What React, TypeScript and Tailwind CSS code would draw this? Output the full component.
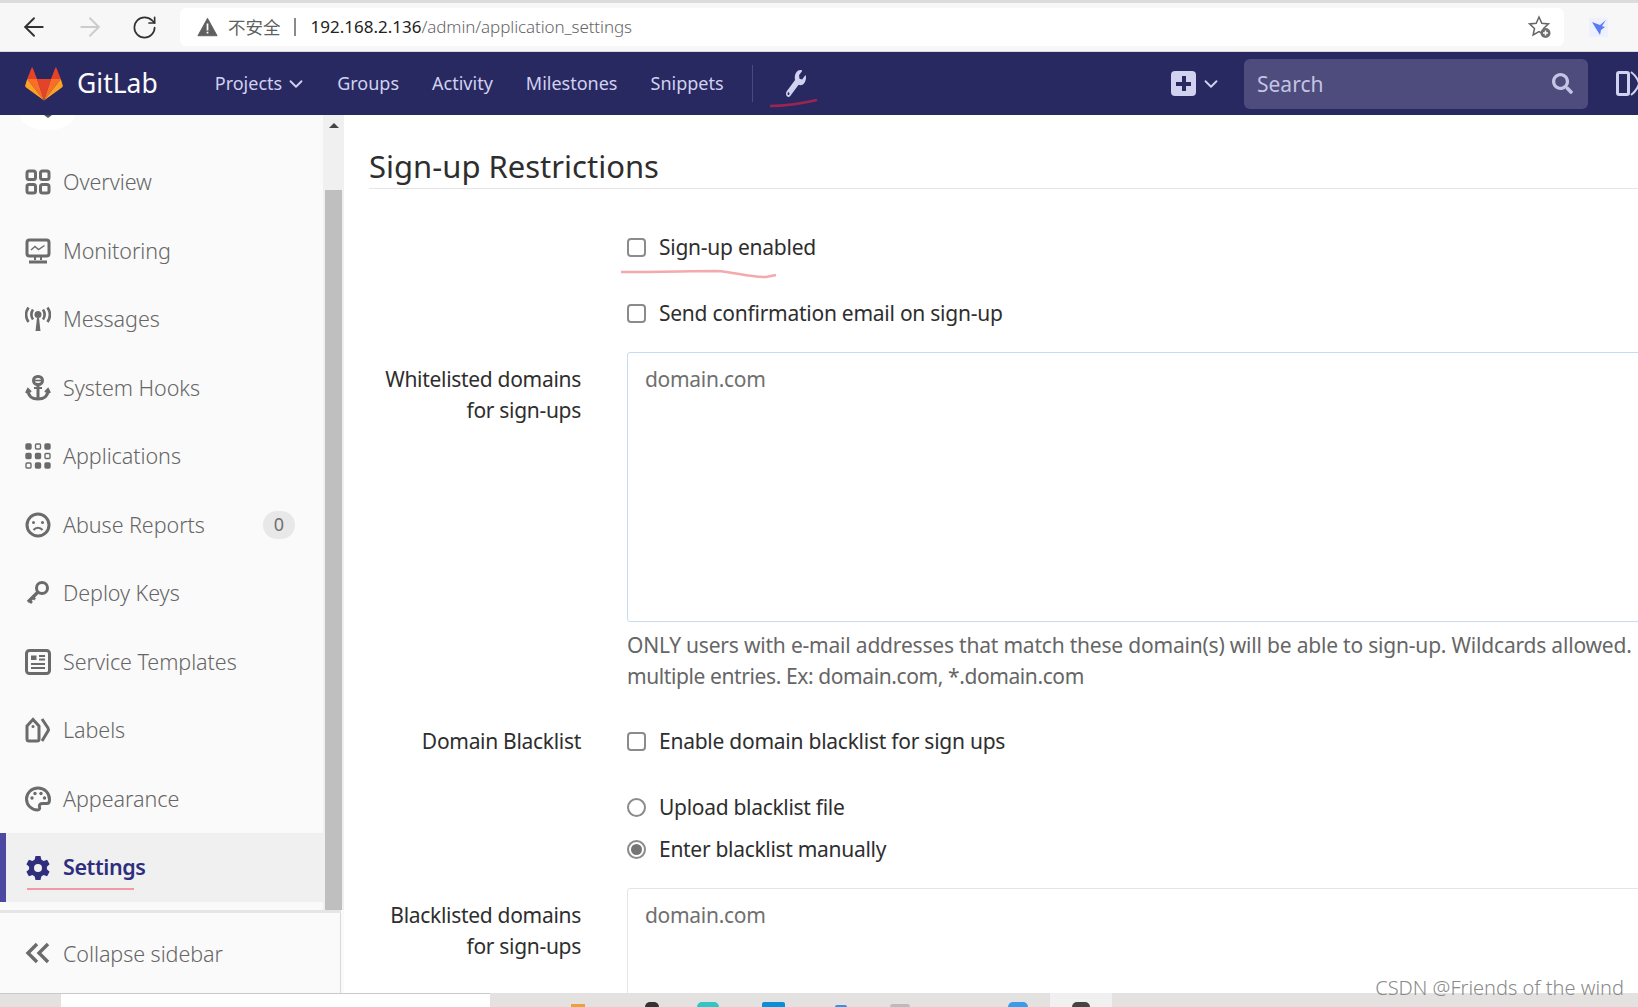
import { ArrowLeft, ArrowRight, RotateCw, ChevronDown } from 'lucide-react';
import { FaSearch, FaWrench } from 'react-icons/fa';

const font = "font-['Noto_Sans','Open_Sans',sans-serif]";

const OverviewIcon = () => (
  <svg viewBox="0 0 26 26" className="w-[26px] h-[26px]" fill="none" stroke="#6b6b6b" strokeWidth="3">
    <rect x="2" y="2" width="8.5" height="8.5" rx="2" />
    <rect x="15.5" y="2" width="8.5" height="8.5" rx="2" />
    <rect x="2" y="15.5" width="8.5" height="8.5" rx="2" />
    <rect x="15.5" y="15.5" width="8.5" height="8.5" rx="2" />
  </svg>
);

const MonitorIcon = () => (
  <svg viewBox="0 0 26 26" className="w-[26px] h-[26px]" fill="none" stroke="#6b6b6b">
    <rect x="2" y="2" width="22" height="16" rx="2.5" strokeWidth="3" />
    <path d="M6 12l4-3.5 3.5 3 6-4" strokeWidth="1.4" />
    <path d="M10 19v3M16 19v3" strokeWidth="2" />
    <path d="M4 24h18" strokeWidth="3" />
  </svg>
);

const MessagesIcon = () => (
  <svg viewBox="0 0 26 26" className="w-[26px] h-[26px]" fill="none" stroke="#6b6b6b" strokeWidth="2.6">
    <circle cx="13" cy="8.5" r="3.5" fill="#6b6b6b" stroke="none" />
    <path d="M8 3.5c-2 3-2 7 0 10M18 3.5c2 3 2 7 0 10M3.5 1.5c-3 4.500-3 10 0 14.500M22.500 1.500c3 4.500 3 10 0 14.500" />
    <path d="M10.500 25l1.500-13h2l1.500 13z" fill="#6b6b6b" stroke="none" />
  </svg>
);

const AnchorIcon = () => (
  <svg viewBox="0 0 26 26" className="w-[26px] h-[26px]" fill="none" stroke="#6b6b6b" strokeWidth="3">
    <rect x="8.500" y="1.500" width="9" height="8" rx="4" />
    <path d="M13 9v15" />
    <path d="M3 15c0 6 4 9 10 9s10-3 10-9" />
    <path d="M9 5.500h8" strokeWidth="1.600" />
    <path d="M9 13h8M1 18l2-4 3 3M25 18l-2-4-3 3" strokeWidth="2" />
  </svg>
);

const AppsIcon = () => (
  <svg viewBox="0 0 26 26" className="w-[26px] h-[26px]" fill="#6b6b6b" stroke="#6b6b6b" strokeWidth="1.4">
    <rect x="1" y="1" width="5" height="5" rx="1" />
    <rect x="10.500" y="1" width="5" height="5" rx="1" fill="none" />
    <rect x="20" y="1" width="5" height="5" rx="1" />
    <rect x="1" y="10.500" width="5" height="5" rx="1" />
    <rect x="10.500" y="10.500" width="5" height="5" rx="1" />
    <rect x="20" y="10.500" width="5" height="5" rx="1" fill="none" />
    <rect x="1" y="20" width="5" height="5" rx="1" fill="none" />
    <rect x="10.500" y="20" width="5" height="5" rx="1" />
    <rect x="20" y="20" width="5" height="5" rx="1" />
  </svg>
);

const AbuseIcon = () => (
  <svg viewBox="0 0 26 26" className="w-[26px] h-[26px]" fill="none" stroke="#6b6b6b" strokeWidth="3">
    <circle cx="13" cy="13" r="11" />
    <circle cx="8.500" cy="10.500" r="1.500" fill="#6b6b6b" stroke="none" />
    <circle cx="17.500" cy="10.500" r="1.500" fill="#6b6b6b" stroke="none" />
    <path d="M8.500 18c2.500-3 6.500-3 9 0" strokeWidth="2" />
  </svg>
);

const KeyIcon = () => (
  <svg viewBox="0 0 26 26" className="w-[26px] h-[26px]" fill="none" stroke="#6b6b6b" strokeWidth="3">
    <circle cx="17" cy="8" r="5.500" />
    <path d="M13 12L3 22" strokeWidth="3.400" />
    <path d="M4 20l3 3M7.500 17l2.500 2.500" strokeWidth="2.600" />
  </svg>
);

const TemplatesIcon = () => (
  <svg viewBox="0 0 26 26" className="w-[26px] h-[26px]" fill="none" stroke="#6b6b6b">
    <rect x="1.500" y="1.500" width="23" height="23" rx="3" strokeWidth="3" />
    <rect x="6" y="6.500" width="5.500" height="4.500" fill="#6b6b6b" stroke="none" />
    <path d="M14 7h6M14 10.500h6M6 15h14M6 19h14" strokeWidth="1.800" />
  </svg>
);

const LabelsIcon = () => (
  <svg viewBox="0 0 26 26" className="w-[26px] h-[26px]" fill="none" stroke="#6b6b6b" strokeWidth="3">
    <path d="M2 9l6-6.500L14 9v13a2 2 0 0 1-2 2H4a2 2 0 0 1-2-2z" />
    <circle cx="8" cy="9.500" r="1.500" fill="#6b6b6b" stroke="none" />
    <path d="M17 2l6 9c.6 1 .6 2 0 3l-6 10" />
  </svg>
);

const PaletteIcon = () => (
  <svg viewBox="0 0 26 26" className="w-[26px] h-[26px]" fill="none" stroke="#6b6b6b" strokeWidth="3">
    <path d="M13 2C6.500 2 1.500 7 1.500 13S6.500 24 12.500 24c2 0 2.500-1.500 2-3-.7-2.500 1-3.500 3-3.500H22c1.500 0 2.500-1.500 2.500-4C24.500 7 19.500 2 13 2z" />
    <circle cx="7" cy="12" r="1.700" fill="#6b6b6b" stroke="none" />
    <circle cx="10" cy="7.500" r="1.700" fill="#6b6b6b" stroke="none" />
    <circle cx="16" cy="7.500" r="1.700" fill="#6b6b6b" stroke="none" />
    <circle cx="19.500" cy="12" r="1.700" fill="#6b6b6b" stroke="none" />
  </svg>
);

const GearIcon = () => (
  <svg viewBox="0 0 26 26" className="w-[26px] h-[26px]">
    <path
      fillRule="evenodd"
      fill="#2f2e7d"
      d="M10.500 1h5l.8 3.600 2.300 1.300 3.500-1.100 2.500 4.400-2.700 2.500v2.600l2.700 2.500-2.500 4.400-3.500-1.100-2.300 1.300-.8 3.600h-5l-.8-3.600-2.300-1.300-3.500 1.100L1.400 16.800l2.700-2.500v-2.600L1.400 9.200l2.500-4.400 3.500 1.100 2.300-1.300zM13 9a4 4 0 1 0 0 8 4 4 0 0 0 0-8z"
    />
  </svg>
);

const CollapseIcon = () => (
  <svg viewBox="0 0 26 26" className="w-[26px] h-[26px]" fill="none" stroke="#6b6b6b" strokeWidth="3.400">
    <path d="M12 4l-9 9 9 9M23 4l-9 9 9 9" />
  </svg>
);

const GitLabLogo = () => (
  <svg viewBox="0 0 40 36" className="w-[38px] h-[34px] shrink-0">
    <path d="M20 35.500L27.400 12.800H12.600z" fill="#e24329" />
    <path d="M20 35.500L12.600 12.800H2.200z" fill="#fc6d26" />
    <path d="M2.200 12.800L.1 19.700c-.2.600 0 1.300.6 1.700L20 35.500z" fill="#fca326" />
    <path d="M2.200 12.800h10.400L8.100 1c-.2-.6-1.100-.6-1.300 0z" fill="#e24329" />
    <path d="M20 35.500l7.400-22.700h10.400z" fill="#fc6d26" />
    <path d="M37.800 12.800l2.100 6.900c.2.600 0 1.300-.6 1.700L20 35.500z" fill="#fca326" />
    <path d="M37.800 12.800H27.400L31.900 1c.2-.6 1.100-.6 1.300 0z" fill="#e24329" />
  </svg>
);

const sideItems = [
  { label: 'Overview', icon: OverviewIcon },
  { label: 'Monitoring', icon: MonitorIcon },
  { label: 'Messages', icon: MessagesIcon },
  { label: 'System Hooks', icon: AnchorIcon },
  { label: 'Applications', icon: AppsIcon },
  { label: 'Abuse Reports', icon: AbuseIcon, badge: '0' },
  { label: 'Deploy Keys', icon: KeyIcon },
  { label: 'Service Templates', icon: TemplatesIcon },
  { label: 'Labels', icon: LabelsIcon },
  { label: 'Appearance', icon: PaletteIcon },
];

const navLinks = ['Groups', 'Activity', 'Milestones', 'Snippets'];

const Checkbox = ({ label }: { label: string }) => (
  <label className="flex items-center h-[32px] text-[21px] tracking-[-0.25px] text-[#2e2e2e]">
    <span className="w-[19px] h-[19px] rounded-[4px] border-2 border-[#8b8b8b] bg-white mr-[13px] shrink-0"></span>
    <span className="pt-[2px]">{label}</span>
  </label>
);

const Radio = ({ label, checked }: { label: string; checked?: boolean }) => (
  <label className="flex items-center h-[32px] text-[21px] tracking-[-0.3px] text-[#2e2e2e]">
    <span className="w-[19px] h-[19px] rounded-full border-2 border-[#8b8b8b] bg-white mr-[13px] shrink-0 flex items-center justify-center">
      {checked && <span className="w-[11px] h-[11px] rounded-full bg-[#757575]"></span>}
    </span>
    <span className="pt-[2px]">{label}</span>
  </label>
);

const FormLabel = ({ lines }: { lines: string[] }) => (
  <div className="w-[212px] shrink-0 text-right text-[21px] tracking-[-0.3px] leading-[31px] text-[#2e2e2e]">
    {lines.map((line) => (
      <div key={line}>{line}</div>
    ))}
  </div>
);

export default function App() {
  return (
    <div className={`w-[1638px] h-[1007px] overflow-hidden flex flex-col bg-white relative ${font}`}>
      {/* Browser chrome */}
      <div className="h-[52px] shrink-0 bg-[#f7f7f7] border-t-[3px] border-[#dcdcdc] border-b border-b-[#d8d8d8] flex items-center pl-[19px]">
        <ArrowLeft className="w-[30px] h-[30px] text-[#333] shrink-0" strokeWidth={1.5} />
        <ArrowRight className="ml-[26px] w-[30px] h-[30px] text-[#ccc] shrink-0" strokeWidth={1.5} />
        <RotateCw className="ml-[26px] w-[27px] h-[27px] text-[#333] shrink-0" strokeWidth={1.5} />
        <div className="ml-[22px] w-[1384px] h-[38px] bg-white rounded-[6px] flex items-center pl-[17px] pr-[12px] shrink-0">
          <svg viewBox="0 0 24 22" className="w-[21px] h-[20px] shrink-0">
            <path d="M12 1L23 21H1z" fill="#5f5f5f" stroke="#5f5f5f" strokeLinejoin="round" />
            <path d="M11 7h2v8h-2zM11 16.500h2v2h-2z" fill="#fff" />
          </svg>
          <span className="ml-[10px] text-[17.5px] text-[#5f5f5f] font-['Noto_Sans_CJK_SC',sans-serif]">不安全</span>
          <span className="ml-[13px] w-[2px] h-[18px] bg-[#8a8a8a]"></span>
          <span className="ml-[15px] text-[17px] text-[#222]">192.168.2.136</span>
          <span className="text-[17px] font-light tracking-[-0.1px] text-[#666]">/admin/application_settings</span>
          <svg viewBox="0 0 24 24" className="ml-auto w-[24px] h-[24px] shrink-0" fill="none" stroke="#666" strokeWidth="1.500">
            <path d="M11 2l2.800 6.200 6.700.7-5 4.500 1.400 6.600L11 16.600 5.100 20l1.400-6.600-5-4.500 6.700-.7z" />
            <circle cx="17.500" cy="18" r="5" fill="#6f6f6f" stroke="none" />
            <path d="M17.500 15.500v5M15 18h5" stroke="#fff" />
          </svg>
        </div>
        <div className="ml-[25px] w-[19px] h-[19px] bg-[#eef0ff] shrink-0">
          <svg viewBox="0 0 19 19" className="w-[19px] h-[19px]">
            <path d="M17 2l-6 5L3 4l3 5 5 8 1-5 4-3-3-1z" fill="#5b7bf5" />
          </svg>
        </div>
      </div>

      {/* GitLab nav */}
      <div className="h-[63px] shrink-0 bg-[#292961] flex items-center text-[#d1d1f0] pl-[25px]">
        <GitLabLogo />
        <span className="ml-[14px] text-[26.500px] text-[#fafafa]">GitLab</span>
        <div className="ml-[57px] flex items-center gap-[33px] text-[18px] shrink-0">
          <span className="flex items-center -mr-[3px]">
            Projects
            <ChevronDown className="w-[22px] h-[22px] ml-[3px]" strokeWidth={2} />
          </span>
          {navLinks.map((name) => (
            <span key={name}>{name}</span>
          ))}
        </div>
        <span className="ml-[28px] w-px h-[37px] bg-[#4a4a82] shrink-0"></span>
        <FaWrench className="ml-[33px] w-[20px] h-[27px] shrink-0 text-[#d1d1f0]" preserveAspectRatio="none" />
        <div className="ml-auto flex items-center shrink-0">
          <div className="w-[25px] h-[25px] rounded-[4px] bg-[#d1d1f0] flex items-center justify-center">
            <span className="relative w-[15px] h-[15px]">
              <span className="absolute left-[5.500px] top-0 w-[4px] h-[15px] bg-[#292961]"></span>
              <span className="absolute left-0 top-[5.500px] w-[15px] h-[4px] bg-[#292961]"></span>
            </span>
          </div>
          <ChevronDown className="w-[22px] h-[22px] ml-[4px]" strokeWidth={2} />
          <div className="ml-[22px] w-[344px] h-[50px] rounded-[6px] bg-[#4d4c7d] flex items-center pl-[13px] pr-[15px]">
            <span className="pt-[3px] text-[21px] text-[#c4c4e4]">Search</span>
            <FaSearch className="ml-auto w-[21px] h-[21px] text-[#c4c4e4]" />
          </div>
          <div className="ml-[28px] w-[14px] h-[25px] border-[3px] border-[#d1d1f0] rounded-[3px]"></div>
          <svg viewBox="0 0 8 25" className="w-[8px] h-[25px] shrink-0" fill="none" stroke="#d1d1f0" strokeWidth="2">
            <path d="M1 1c4 3 7 8 8 11" />
            <path d="M1 24c4-3 7-8 8-11" />
          </svg>
        </div>
      </div>

      {/* Body */}
      <div className="flex-1 min-h-0 flex">
        {/* Sidebar */}
        <aside className="w-[344px] shrink-0 bg-[#fafafa] flex flex-col">
          <div className="h-[795px] flex shrink-0">
            <div className="w-[323px] shrink-0 flex flex-col">
              <div className="ml-[20px] w-[55px] h-[15px] [border-radius:0_0_50%_50%/0_0_100%_100%] bg-white flex justify-center shrink-0">
                <span className="w-0 h-0 border-l-[4px] border-r-[4px] border-t-[3px] border-l-transparent border-r-transparent border-t-[#555]"></span>
              </div>
              <nav className="pt-[18px] flex flex-col">
                {sideItems.map((item) => {
                  const Icon = item.icon;
                  return (
                    <div key={item.label} className="h-[68.500px] flex items-center pl-[25px] relative">
                      <Icon />
                      <span className="ml-[12px] text-[21.500px] font-light tracking-[-0.05px] text-[#666]">{item.label}</span>
                      {item.badge && (
                        <span className="absolute left-[263px] top-[20px] w-[32px] h-[28px] rounded-full bg-[#e8e8e8] text-[#707070] text-[18px] flex items-center justify-center">
                          {item.badge}
                        </span>
                      )}
                    </div>
                  );
                })}
                <div className="h-[69px] flex items-center pl-[19px] bg-[#f0f0f0] border-l-[6px] border-[#4b49a0] relative">
                  <GearIcon />
                  <span className="ml-[12px] text-[21.500px] font-semibold tracking-[-0.4px] text-[#2f2e7d]">Settings</span>
                  <span className="absolute left-[21px] top-[55px] w-[107px] h-[2px] bg-[#ef9aa4]"></span>
                </div>
              </nav>
            </div>
            <div className="w-[21px] shrink-0 bg-[#f0f0f0] flex flex-col">
              <span className="mt-[8px] ml-[6px] w-0 h-0 border-l-[5px] border-r-[5px] border-b-[5px] border-l-transparent border-r-transparent border-b-[#444]"></span>
              <div className="mt-[62px] ml-[2px] w-[17px] flex-1 bg-[#bfbfbf]"></div>
            </div>
          </div>
          <div className="h-[3px] w-[341px] bg-[#e5e5e5] shrink-0"></div>
          <div className="h-[80px] w-[341px] flex items-center pl-[25px] border-r border-[#d8d8d8] shrink-0">
            <CollapseIcon />
            <span className="ml-[12px] pt-[2px] text-[21.500px] font-light tracking-[-0.05px] text-[#666]">Collapse sidebar</span>
          </div>
        </aside>

        {/* Content */}
        <main className="flex-1 min-w-0 pl-[25px] pt-[31px] overflow-hidden">
          <div className="h-[43px] pt-[2px] border-b border-[#e5e5e5] text-[31px] leading-[36px] text-[#2e2e2e]">
            Sign-up Restrictions
          </div>

          <div className="flex mt-[42px]">
            <div className="w-[212px] shrink-0"></div>
            <div className="ml-[46px]">
              <Checkbox label="Sign-up enabled" />
              <div className="h-[34px]"></div>
              <Checkbox label="Send confirmation email on sign-up" />
            </div>
          </div>

          <div className="flex mt-[23px]">
            <div className="pt-[12px]">
              <FormLabel lines={['Whitelisted domains', 'for sign-ups']} />
            </div>
            <div className="ml-[46px] flex-1 min-w-0">
              <div className="w-[1100px] h-[270px] border border-[#c5dcf2] rounded-[3px] pl-[17px] pt-[11px] text-[21px] tracking-[-0.3px] text-[#707070]">
                domain.com
              </div>
              <p className="w-[1100px] mt-[8px] text-[21px] leading-[31px] text-[#666]">
                <span className="tracking-[-0.2px]">
                  ONLY users with e-mail addresses that match these domain(s) will be able to sign-up. Wildcards allowed.
                </span>
                <br />
                <span className="tracking-[-0.4px]">multiple entries. Ex: domain.com, *.domain.com</span>
              </p>
            </div>
          </div>

          <div className="flex mt-[33px] items-center">
            <FormLabel lines={['Domain Blacklist']} />
            <div className="ml-[46px]">
              <Checkbox label="Enable domain blacklist for sign ups" />
            </div>
          </div>

          <div className="flex mt-[34px]">
            <div className="w-[212px] shrink-0"></div>
            <div className="ml-[46px]">
              <Radio label="Upload blacklist file" />
              <div className="h-[10px]"></div>
              <Radio checked label="Enter blacklist manually" />
            </div>
          </div>

          <div className="flex mt-[23px]">
            <div className="pt-[12px]">
              <FormLabel lines={['Blacklisted domains', 'for sign-ups']} />
            </div>
            <div className="ml-[46px] flex-1 min-w-0">
              <div className="w-[1100px] h-[160px] border border-[#e5e5e5] rounded-[3px] pl-[17px] pt-[11px] text-[21px] tracking-[-0.3px] text-[#707070]">
                domain.com
              </div>
            </div>
          </div>
        </main>
      </div>

      {/* Taskbar strip */}
      <div className="h-[14px] shrink-0 bg-[#e3e2e0] flex items-start">
        <div className="w-[61px] h-full border-t border-[#c9c9c9]"></div>
        <div className="w-[429px] h-full bg-white border-t border-[#c9c9c9]"></div>
        <div className="relative flex-1 h-full">
          <span className="absolute left-[81px] top-[11px] w-[14px] h-[3px] bg-[#e8a33d]"></span>
          <span className="absolute left-[155px] top-[9px] w-[14px] h-[5px] rounded-t-full bg-[#333]"></span>
          <span className="absolute left-[207px] top-[9px] w-[22px] h-[5px] rounded-t-full bg-[#31c6c4]"></span>
          <span className="absolute left-[272px] top-[9px] w-[23px] h-[5px] rounded-t-[2px] bg-[#0a8fd6]"></span>
          <span className="absolute left-[345px] top-[12px] w-[12px] h-[2px] rounded-t-full bg-[#3a8fe0]"></span>
          <span className="absolute left-[400px] top-[11px] w-[20px] h-[3px] rounded-t-full bg-[#bbb]"></span>
          <span className="absolute left-[518px] top-[9px] w-[20px] h-[5px] rounded-t-full bg-[#3a9bea]"></span>
          <div className="absolute left-[560px] top-0 w-[62px] h-full bg-[#f0f0f0] flex justify-center items-end">
            <span className="w-[18px] h-[5px] rounded-t-md bg-[#444]"></span>
          </div>
        </div>
      </div>

      {/* Pen annotations and watermark over the page */}
      <svg className="absolute left-0 top-0 w-[1638px] h-[1007px] pointer-events-none" viewBox="0 0 1638 1007" fill="none">
        <path d="M621 272c40 0 70-1 95-1 20 1 30 6 50 6l10-2" stroke="#f4a9ad" strokeWidth="2.500" />
        <path d="M770 106c15 0 25-1 47-6" stroke="#9c2550" strokeWidth="2.500" />
      </svg>
      <span className="absolute right-[14px] bottom-[4px] text-[20px] font-light text-[#8a8a8a]">CSDN @Friends of the wind</span>
    </div>
  );
}
